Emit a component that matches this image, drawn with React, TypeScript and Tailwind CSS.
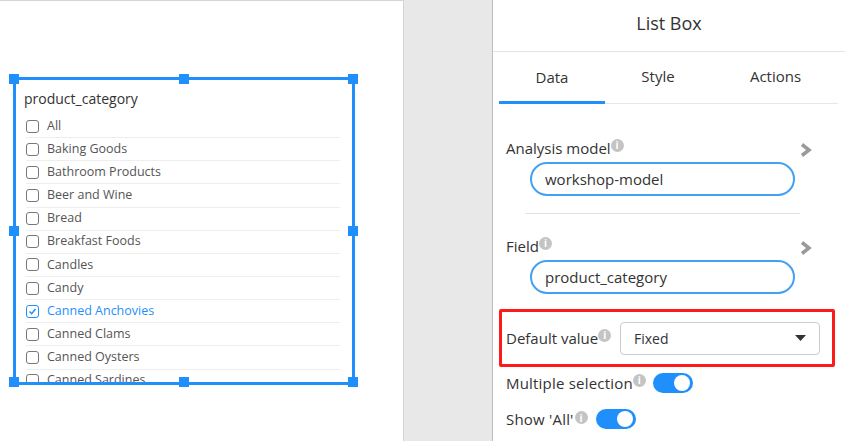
import React from 'react';

const items = [
  'All',
  'Baking Goods',
  'Bathroom Products',
  'Beer and Wine',
  'Bread',
  'Breakfast Foods',
  'Candles',
  'Candy',
  'Canned Anchovies',
  'Canned Clams',
  'Canned Oysters',
  'Canned Sardines',
];

const Info: React.FC = () => (
  <span className="inline-flex w-[13px] h-[13px] rounded-full bg-[#c4c4c4] text-white text-[10px] font-bold leading-none items-center justify-center -translate-y-[3px] shrink-0">
    i
  </span>
);

const Chevron: React.FC = () => (
  <svg width="12" height="14" viewBox="0 0 12 14" className="shrink-0">
    <polyline points="2,1.5 9,7 2,12.5" fill="none" stroke="#9a9a9a" strokeWidth="3.5" />
  </svg>
);

const Toggle: React.FC = () => (
  <div className="w-[40px] h-[20px] rounded-full bg-[#1e8ffb] relative shrink-0">
    <div className="absolute right-[3px] top-[2px] w-[16px] h-[16px] rounded-full bg-white"></div>
  </div>
);

const Handle: React.FC<{ className: string }> = ({ className }) => (
  <div className={`absolute w-[10px] h-[10px] bg-[#1e8ffb] ${className}`}></div>
);

const App: React.FC = () => {
  return (
    <div className="w-[845px] h-[441px] flex bg-[#e8e8e8] overflow-hidden text-[#333] font-['Open_Sans',sans-serif]">

      {/* Canvas */}
      <div className="w-[404px] h-full bg-white border-r border-[#d4d4d4] border-t shrink-0 pl-[13px] pt-[76px]">
        <div className="relative w-[342px] h-[308px]">
          <div className="w-full h-full border-[3px] border-[#1e8ffb] overflow-hidden">
            <div className="pl-[8px] pt-[9px] h-[35px] text-[14px] leading-[20px] text-[#333]">product_category</div>
            <div className="pl-[10px] pr-[12px]">
              {items.map((it) => {
                const checked = it === 'Canned Anchovies';
                return (
                  <div key={it} className="h-[23.15px] flex items-center border-b border-[#eeeeee]">
                    <div className={`w-[13px] h-[13px] rounded-[3px] border flex items-center justify-center ${checked ? 'border-[#1e8ffb]' : 'border-[#777]'}`}>
                      {checked && (
                        <svg width="9" height="9" viewBox="0 0 9 9">
                          <polyline points="1.5,4.5 3.7,6.7 7.5,2" fill="none" stroke="#1e8ffb" strokeWidth="1.5" />
                        </svg>
                      )}
                    </div>
                    <span className={`ml-[8px] text-[12.5px] ${checked ? 'text-[#1e8ffb]' : 'text-[#555]'}`}>{it}</span>
                  </div>
                );
              })}
            </div>
          </div>
          <Handle className="-left-[4px] -top-[3px]" />
          <Handle className="left-[166px] -top-[3px]" />
          <Handle className="-right-[3px] -top-[3px]" />
          <Handle className="-left-[4px] top-[149px]" />
          <Handle className="-right-[3px] top-[149px]" />
          <Handle className="-left-[4px] -bottom-[2px]" />
          <Handle className="left-[166px] -bottom-[2px]" />
          <Handle className="-right-[3px] -bottom-[2px]" />
        </div>
      </div>

      <div className="w-[88px] shrink-0"></div>

      {/* Properties panel */}
      <div className="flex-1 h-full bg-white border-l border-[#bdbdbd]">
        <div className="h-[52px] border-b border-[#e2e2e2] flex items-center justify-center pb-[5px] text-[18px] text-[#333]">
          List Box
        </div>

        <div className="ml-[6px] mr-[7px] h-[52px] flex border-b border-[#e6e6e6] text-[15px]">
          <div className="w-[106px] flex items-center justify-center border-b-[3px] border-[#1e8ffb] -mb-px pt-[1px]">Data</div>
          <div className="w-[106px] flex items-center justify-center pb-[2px]">Style</div>
          <div className="flex-1 flex items-center justify-center pb-[2px] pl-[2px]">Actions</div>
        </div>

        <div className="pl-[13px] pr-[33px] pt-[34px]">
          <div className="flex items-center justify-between h-[20px]">
            <div className="flex items-center text-[15px]">
              <span>Analysis model</span>
              <Info />
            </div>
            <div className="mt-[4px]"><Chevron /></div>
          </div>
          <div className="ml-[24px] mr-[17px] mt-[4px] h-[34px] rounded-full border-2 border-[#43a0f2] flex items-center pl-[13px] text-[15px]">
            workshop-model
          </div>
          <div className="ml-[19px] mr-[12px] mt-[17px] border-t border-[#e2e2e2]"></div>

          <div className="flex items-center justify-between h-[20px] mt-[22px]">
            <div className="flex items-center text-[15px]">
              <span>Field</span>
              <Info />
            </div>
            <div className="mt-[4px]"><Chevron /></div>
          </div>
          <div className="ml-[24px] mr-[17px] mt-[4px] h-[34px] rounded-full border-2 border-[#43a0f2] flex items-center pl-[13px] text-[15px]">
            product_category
          </div>
        </div>

        <div className="ml-[6px] mr-[10px] mt-[15px] h-[58px] border-[3px] border-[#ff1a1a] rounded-[2px] flex items-center pl-[4px] pr-[12px]">
          <div className="flex items-center text-[15px] w-[114px]">
            <span>Default value</span>
            <Info />
          </div>
          <div className="flex-1 h-[33px] border border-[#cccccc] rounded-[4px] flex items-center justify-between pl-[13px] pr-[13px] text-[14px]">
            <span>Fixed</span>
            <svg width="11" height="6" viewBox="0 0 11 6"><polygon points="0,0 11,0 5.5,6" fill="#333" /></svg>
          </div>
        </div>

        <div className="pl-[13px] mt-[6px] flex items-center h-[20px] text-[15px]">
          <span className="tracking-[0.2px]">Multiple selection</span>
          <Info />
          <div className="ml-[7px]"><Toggle /></div>
        </div>
        <div className="pl-[13px] mt-[16px] flex items-center h-[20px] text-[15px]">
          <span className="tracking-[0.2px]">Show 'All'</span>
          <span className="ml-[1px]"><Info /></span>
          <div className="ml-[8px]"><Toggle /></div>
        </div>
      </div>
    </div>
  );
};

export default App;
